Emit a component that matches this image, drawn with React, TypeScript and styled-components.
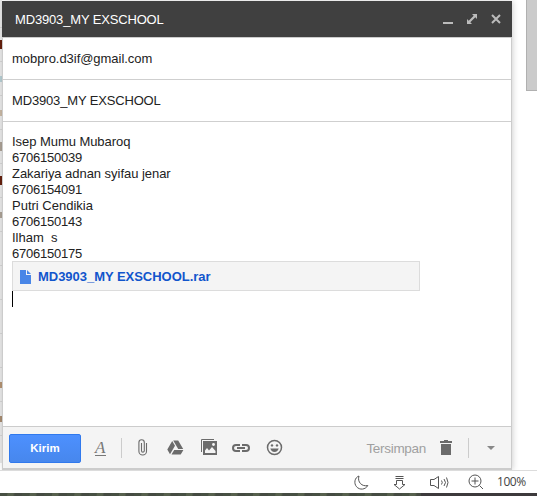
import React from 'react';
import styled, { createGlobalStyle } from 'styled-components';

const GlobalStyle = createGlobalStyle`
  * { box-sizing: border-box; }
  html, body { margin: 0; overflow: hidden; background: #fff; }
  body { font-family: "Liberation Sans", Arial, sans-serif; font-size: 13px; color: #222; }
  svg { display: block; }
`;

const Screen = styled.div`
  width: 537px;
  height: 496px;
  display: flex;
  flex-direction: column;
  overflow: hidden;
`;

const Workspace = styled.div`
  height: 471px;
  display: flex;
  border-bottom: 1px solid #dcdcdc;
  overflow: hidden;
`;

const Inbox = styled.div`
  width: 2px;
  height: 463px;
  padding-top: 27px;
  background: #e8e8e8;
  overflow: hidden;
`;

const InboxRow = styled.div<{ $mark?: string; $tall?: boolean }>`
  height: 34px;
  border-top: 1px solid #d4d4d4;
  padding-top: ${(p) => (p.$tall ? 12 : 14)}px;
  &::before {
    content: '';
    display: block;
    width: 2px;
    height: ${(p) => (p.$tall ? 9 : 6)}px;
    background: ${(p) => p.$mark || 'transparent'};
  }
`;

const Compose = styled.section`
  width: 510px;
  height: 469px;
  margin-top: 1px;
  display: flex;
  flex-direction: column;
  position: relative;
  box-shadow: 1px 0 6px rgba(0, 0, 0, 0.18);
`;

const TitleBar = styled.header`
  height: 36px;
  flex: none;
  padding: 0 10px 0 13px;
  display: flex;
  align-items: center;
  justify-content: space-between;
  background: #404040;
  color: #fff;
`;

const WindowButtons = styled.div`
  display: flex;
  gap: 12px;
`;

const Sheet = styled.div`
  flex: 1;
  display: flex;
  flex-direction: column;
  border: solid #ccc;
  border-width: 1px 1px 2px;
  background: #fff;
`;

const Field = styled.div`
  height: 42px;
  flex: none;
  padding: 0 9px;
  line-height: 41px;
  border-bottom: 1px solid #cfcfcf;
`;

const Message = styled.div`
  flex: 1;
  padding: 12px 9px;
`;

const Line = styled.div`
  height: 16px;
  line-height: 16px;
  white-space: pre;
`;

const Text = styled.span<{ $spacing?: number }>`
  letter-spacing: ${(p) => p.$spacing || 0}px;
`;

const Attachment = styled.div`
  width: 408px;
  height: 30px;
  margin-top: -1px;
  padding: 1px 7px 0;
  display: flex;
  align-items: center;
  gap: 7px;
  background: #f4f4f4;
  border: 1px solid #dcdcdc;
  color: #15c;
  font-weight: bold;
  line-height: 17px;
`;

const Caret = styled.div`
  width: 1px;
  height: 16px;
  background: #000;
`;

const Toolbar = styled.footer`
  height: 42px;
  flex: none;
  display: flex;
  align-items: center;
  padding: 0 6px;
  border-top: 1px solid #ccc;
  background: #f4f4f4;
`;

const SendButton = styled.button`
  width: 72px;
  height: 29px;
  margin-top: 1px;
  padding: 0;
  border: 1px solid #3079ed;
  border-radius: 2px;
  background: linear-gradient(#4d90fe, #4787ed);
  color: #fff;
  font: bold 11.5px "Liberation Sans", Arial, sans-serif;
`;

const ToolIcon = styled.div<{ $left: number }>`
  margin-left: ${(p) => p.$left}px;
  color: #6b6b6b;
`;

const FontIcon = styled.span`
  display: block;
  width: 11px;
  height: 15px;
  margin-top: 2px;
  border-bottom: 1px solid #777;
  font: italic 17px/13px "Liberation Serif", serif;
  color: #777;
`;

const Divider = styled.div<{ $left: number }>`
  width: 1px;
  height: 20px;
  margin-left: ${(p) => p.$left}px;
  background: #ccc;
`;

const Saved = styled.span`
  margin-left: auto;
  padding-top: 1px;
  color: #a0a0a0;
  font-size: 13.5px;
  letter-spacing: -0.3px;
`;

const ScrollTrack = styled.div`
  margin-left: auto;
  width: 11px;
`;

const ScrollThumb = styled.div`
  height: 91px;
  background: #cbcbcb;
  border: solid #b0b0b0;
  border-width: 0 0 1px 1px;
`;

const StatusBar = styled.div`
  height: 22px;
  flex: none;
  display: flex;
  align-items: center;
  justify-content: flex-end;
  padding-right: 12px;
  background: #fff;
  color: #555;
`;

const StatusIcon = styled.div<{ $gap: number }>`
  margin-right: ${(p) => p.$gap}px;
`;

const Zoom = styled.span`
  width: 28px;
  font: 12px/22px "Open Sans", sans-serif;
  letter-spacing: -0.45px;
  color: #444;
  white-space: nowrap;
`;

const Desktop = styled.div`
  height: 3px;
  display: flex;
  background: repeating-linear-gradient(100deg, #475043 0 7px, #56604d 8px 13px, #454b42 15px 22px);
`;

const Taskbar = styled.div`
  width: 116px;
  margin-left: auto;
  background: #3d3a3c;
`;

const inboxRows: { mark?: string; tall?: boolean }[] = [
  { mark: '#65200d', tall: true },
  { mark: '#b5cdd2' },
  { mark: '#c8b8a4' },
  { mark: '#aaa095', tall: true },
  { mark: '#65200d', tall: true },
  { mark: '#aaa095' },
  {}, {}, {}, {},
  { mark: '#b39272' },
  { mark: '#a78b70' },
  {},
];

const messageLines = [
  { text: 'Isep Mumu Mubaroq', spacing: -0.05 },
  { text: '6706150039', spacing: -0.23 },
  { text: 'Zakariya adnan syifau jenar', spacing: -0.04 },
  { text: '6706154091', spacing: -0.23 },
  { text: 'Putri Cendikia', spacing: 0 },
  { text: '6706150143', spacing: -0.23 },
  { text: 'Ilham  s', spacing: 0 },
  { text: '6706150175', spacing: -0.23 },
];

export default function App() {
  return (
    <Screen>
      <GlobalStyle />
      <Workspace>
        <Inbox>
          {inboxRows.map((row, i) => (
            <InboxRow key={i} $mark={row.mark} $tall={row.tall} />
          ))}
        </Inbox>
        <Compose>
          <TitleBar>
            <Text $spacing={-0.16}>MD3903_MY EXSCHOOL</Text>
            <WindowButtons>
              <svg width="12" height="12" viewBox="0 0 12 12"><path d="M1 9h10v2H1z" fill="#bbb" /></svg>
              <svg width="12" height="12" viewBox="0 0 12 12" fill="#bbb">
                <path d="M6 1h5v5L9.300 4.300 4.300 9.300 6 11H1V6l1.700 1.700 5-5z" />
              </svg>
              <svg width="12" height="12" viewBox="0 0 12 12" stroke="#bbb" strokeWidth="2"><path d="m2 2 8 8m0-8-8 8" /></svg>
            </WindowButtons>
          </TitleBar>
          <Sheet>
            <Field><Text $spacing={-0.04}>mobpro.d3if@gmail.com</Text></Field>
            <Field><Text $spacing={-0.16}>MD3903_MY EXSCHOOL</Text></Field>
            <Message>
              {messageLines.map((line, i) => (
                <Line key={i}><Text $spacing={line.spacing}>{line.text}</Text></Line>
              ))}
              <Attachment>
                <svg width="11" height="14" viewBox="0 0 11 14">
                  <path d="M0 0h6v5h5v9H0z" fill="#4986e7" />
                  <path d="M7 0l4 4H7z" fill="#4986e7" />
                </svg>
                <Text $spacing={-0.03}>MD3903_MY EXSCHOOL.rar</Text>
              </Attachment>
              <Caret />
            </Message>
            <Toolbar>
              <SendButton>Kirim</SendButton>
              <ToolIcon $left={14}><FontIcon>A</FontIcon></ToolIcon>
              <Divider $left={15} />
              <ToolIcon $left={16}>
                <svg width="10" height="17" viewBox="0 0 10 17" fill="none" stroke="currentColor" strokeWidth="1.1">
                  <path d="M8.500 4v8.200a3.800 3.800 0 0 1-7.600 0V3.500a2.700 2.700 0 0 1 5.400 0v8.200a1.400 1.400 0 0 1-2.800 0V4" />
                </svg>
              </ToolIcon>
              <ToolIcon $left={19}>
                <svg width="17" height="15" viewBox="0 0 17 15" fill="currentColor">
                  <path d="M5.200 1 8 5.800 3 14.200.3 9.500zM6.200.5h5L16.200 9h-5zM7.200 10h9.200l-2.700 4.500H4.500z" />
                </svg>
              </ToolIcon>
              <ToolIcon $left={17}>
                <svg width="17" height="17" viewBox="0 0 17 17">
                  <path d="M.5 13V.5H13" fill="none" stroke="currentColor" />
                  <path d="M2 2h14v14H2z" fill="currentColor" />
                  <path d="m4 14 0-2.500 2-2.500 2 2.500 3-3.500 3.500 4v2z" fill="#f4f4f4" />
                  <circle cx="12.500" cy="5.500" r="1.400" fill="#f4f4f4" />
                </svg>
              </ToolIcon>
              <ToolIcon $left={14}>
                <svg width="18" height="8" viewBox="0 0 18 8" fill="none" stroke="currentColor" strokeWidth="2">
                  <path d="M8 1H4a3 3 0 0 0 0 6h4M10 1h4a3 3 0 0 1 0 6h-4M5 4h8" />
                </svg>
              </ToolIcon>
              <ToolIcon $left={16}>
                <svg width="17" height="17" viewBox="0 0 17 17">
                  <circle cx="8.500" cy="8.500" r="7" fill="none" stroke="currentColor" strokeWidth="1.500" />
                  <circle cx="6" cy="6.400" r="1.200" fill="currentColor" />
                  <circle cx="11" cy="6.400" r="1.200" fill="currentColor" />
                  <path d="M4.300 9.500h8.400c-.5 2-2 3.400-4.200 3.400s-3.700-1.400-4.200-3.400z" fill="currentColor" />
                </svg>
              </ToolIcon>
              <Saved>Tersimpan</Saved>
              <ToolIcon $left={14}>
                <svg width="12" height="15" viewBox="0 0 12 15" fill="currentColor">
                  <path d="M0 1h4V0h4v1h4v2H0zM1 4h10v11H1z" />
                </svg>
              </ToolIcon>
              <Divider $left={16} />
              <ToolIcon $left={18}>
                <svg width="18" height="4" viewBox="0 0 18 4"><path d="M0 0h8L4 4z" fill="#888" /></svg>
              </ToolIcon>
            </Toolbar>
          </Sheet>
        </Compose>
        <ScrollTrack><ScrollThumb /></ScrollTrack>
      </Workspace>
      <StatusBar>
        <StatusIcon $gap={24}>
          <svg width="15" height="15" viewBox="0 0 15 15" fill="none" stroke="currentColor">
            <path d="M5 1C.5 2.500-.3 8.500 2.500 11.700c3.200 3.700 9 3 11.300-1.200C8 12 3 7 5 1z" />
          </svg>
        </StatusIcon>
        <StatusIcon $gap={24}>
          <svg width="13" height="15" viewBox="0 0 13 15" fill="none" stroke="currentColor">
            <path d="M2.500 1.500h8M2.500 3.500h8M3.500 5.500h6v4h2.500L6.500 14 1 9.500h2.500z" />
          </svg>
        </StatusIcon>
        <StatusIcon $gap={19}>
          <svg width="19" height="15" viewBox="0 0 19 15" fill="none" stroke="currentColor">
            <path d="M.500 4.500H4L8.500 1.500v12L4 10.500H.500zM11.500 5.500q1.500 2 0 4M14 4q3 3.500 0 7M16.500 2.500q3 5 0 10" />
          </svg>
        </StatusIcon>
        <StatusIcon $gap={13}>
          <svg width="16" height="16" viewBox="0 0 16 16" fill="none" stroke="currentColor">
            <circle cx="7" cy="7" r="6" /><path d="M7 3.500v7M3.500 7h7M11.500 11.500l3.500 3.500" />
          </svg>
        </StatusIcon>
        <Zoom>100%</Zoom>
      </StatusBar>
      <Desktop><Taskbar /></Desktop>
    </Screen>
  );
}
